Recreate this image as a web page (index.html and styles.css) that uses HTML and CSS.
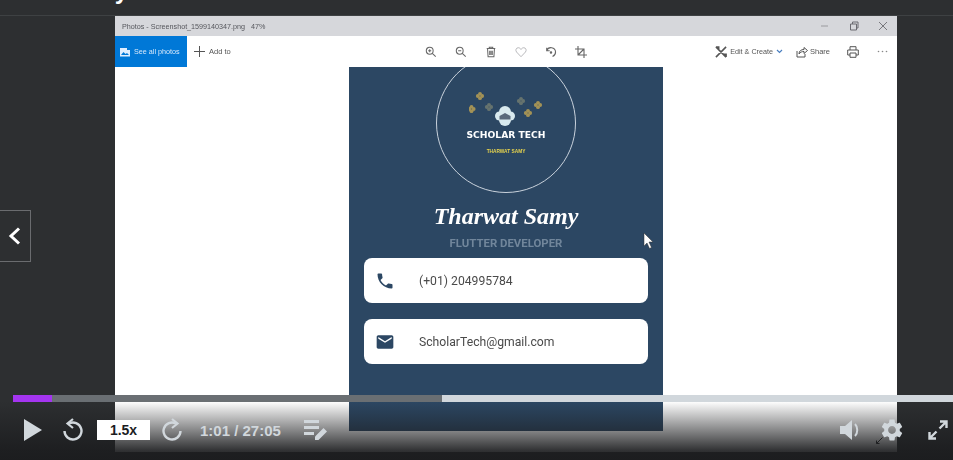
FILE: index.html
```html
<!DOCTYPE html>
<html lang="en">
<head>
    <meta charset="UTF-8">
    <meta name="viewport" content="width=device-width, initial-scale=1.0">
    <title>Course player</title>
    <link rel="stylesheet" href="styles.css">
</head>
<body>
    <div id="top-bar"><span class="course-title">Flutter Study</span></div>
    <div id="stage">
        <div id="video">
            <div class="title-bar">
                <span>Photos - Screenshot_1599140347.png &nbsp; 47%</span>
                <div class="window-buttons">
                    <svg width="12" height="12" viewBox="0 0 12 12"><path d="M2 6h7" stroke="#9a9a9e" fill="none"/></svg>
                    <svg width="12" height="12" viewBox="0 0 12 12"><path d="M2.500 4h6v6h-6zM4.500 4V2h5.500v6H8.500" stroke="#6a6a70" fill="none"/></svg>
                    <svg width="12" height="12" viewBox="0 0 12 12"><path d="M2 2l8 8M10 2l-8 8" stroke="#77777c" fill="none"/></svg>
                </div>
            </div>
            <div class="tool-bar">
                <div class="tools-left">
                    <div class="see-all">
                        <svg width="10" height="10" viewBox="0 0 10 10"><path d="M0 1h7v2h3v6.500H0z" fill="#dfeeff"/><path d="M1 8l2.500-3 2 2 1.500-1 2 2z" fill="#0078d7"/></svg>
                        <span>See all photos</span>
                    </div>
                    <div class="add-to">
                        <svg width="11" height="11" viewBox="0 0 11 11"><path d="M5.500 0v11M0 5.500h11" stroke="#555" fill="none"/></svg>
                        <span>Add to</span>
                    </div>
                </div>
                <div class="tools-center">
                    <svg width="12" height="12" viewBox="0 0 14 14" fill="none" stroke="#666" stroke-width="1.200"><circle cx="5.500" cy="5.500" r="4"/><path d="M8.500 8.500l4 4M3.700 5.500h3.600M5.500 3.700v3.600"/></svg>
                    <svg width="12" height="12" viewBox="0 0 14 14" fill="none" stroke="#666" stroke-width="1.200"><circle cx="5.500" cy="5.500" r="4"/><path d="M8.500 8.500l4 4M3.700 5.500h3.600"/></svg>
                    <svg width="12" height="12" viewBox="0 0 14 14" fill="none" stroke="#666" stroke-width="1.200"><path d="M2 3h10M5 3V1.500h4V3M3 3.500l.6 9h6.800l.6-9M5.500 5.500v5M7 5.500v5M8.500 5.500v5"/></svg>
                    <svg width="12" height="12" viewBox="0 0 14 14" fill="none" stroke="#b5b5b8" stroke-width="1.100"><path d="M7 12.500L1.800 7C.2 5 1.200 2 3.800 2 5.300 2 6.400 3 7 4 7.600 3 8.700 2 10.200 2c2.600 0 3.600 3 2 5z"/></svg>
                    <svg width="12" height="12" viewBox="0 0 14 14" fill="none" stroke="#666" stroke-width="1.300"><path d="M2 5.500A5.300 5.300 0 0 1 12.300 7c0 2.500-1.500 4.400-3.500 5.300M2 2v3.500h3.500"/><circle cx="7" cy="7.500" r=".8" fill="#666"/></svg>
                    <svg width="12" height="12" viewBox="0 0 14 14" fill="none" stroke="#666" stroke-width="1.300"><path d="M3.500 0v10.500H14M0 3.500h10.500V14M3.500 10.500l7-7"/></svg>
                </div>
                <div class="tools-right">
                    <div class="tool-text edit">
                        <svg width="12" height="12" viewBox="0 0 13 13" fill="none" stroke="#555" stroke-width="1.700"><path d="M1 1l11 11M12 1L1 12M1 1h3v3M9 9h3v3"/></svg>
                        <span>Edit &amp; Create</span>
                        <svg width="7" height="5" viewBox="0 0 7 5" fill="none" stroke="#4a7fc0" stroke-width="1.200"><path d="M1 1l2.500 2.500L6 1"/></svg>
                    </div>
                    <div class="tool-text share">
                        <svg width="12" height="12" viewBox="0 0 12 12" fill="none" stroke="#555"><path d="M1 5v6h8V8M3 8c0-3 2-4.500 5-4.500V1.500l3.500 3-3.500 3V5.500C6 5.500 4.500 6 3 8z"/></svg>
                        <span>Share</span>
                    </div>
                    <svg class="print" width="12" height="12" viewBox="0 0 12 12" fill="none" stroke="#555"><path d="M3 4V.7h6V4M3 9H.7V4h10.600v5H9M3 7h6v4.300H3z"/></svg>
                    <svg class="more" width="11" height="3" viewBox="0 0 11 3" fill="#888"><circle cx="1.500" cy="1.500" r=".8"/><circle cx="5.500" cy="1.500" r=".8"/><circle cx="9.500" cy="1.500" r=".8"/></svg>
                </div>
            </div>
            <div class="photo-area">
                <div class="phone-card">
                    <div class="logo-circle">
                        <svg class="logo-art" width="74" height="36" viewBox="0 0 74 36">
                            <defs>
                                <g id="rosette">
                                    <circle cx="0" cy="-2.200" r="1.900"/>
                                    <circle cx="0" cy="2.200" r="1.900"/>
                                    <circle cx="-2.200" cy="0" r="1.900"/>
                                    <circle cx="2.200" cy="0" r="1.900"/>
                                </g>
                            </defs>
                            <g fill="#a39256">
                                <use href="#rosette" x="11" y="5"/>
                                <use href="#rosette" x="2.500" y="18"/>
                                <use href="#rosette" x="69" y="14"/>
                                <use href="#rosette" x="59" y="22"/>
                            </g>
                            <g fill="#66736e">
                                <use href="#rosette" x="20" y="16"/>
                                <use href="#rosette" x="52" y="10"/>
                            </g>
                            <g fill="#d8e9ee">
                                <circle cx="36" cy="21" r="6"/>
                                <circle cx="30.500" cy="25" r="4.500"/>
                                <circle cx="41.500" cy="25" r="4.500"/>
                                <circle cx="36" cy="29" r="6"/>
                            </g>
                            <path d="M30.500 25l5.500-3 5.500 3v3.500h-11z" fill="#59687a"/>
                        </svg>
                        <div class="logo-name">SCHOLAR TECH</div>
                        <div class="logo-owner">THARWAT SAMY</div>
                    </div>
                    <div class="person-name">Tharwat Samy</div>
                    <div class="person-job">FLUTTER DEVELOPER</div>
                    <div class="contact-card">
                        <svg viewBox="0 0 24 24" fill="#2c4763"><path d="M6.620 10.790c1.440 2.830 3.760 5.140 6.590 6.590l2.200-2.200c.27-.27.67-.36 1.020-.24 1.120.37 2.330.57 3.570.57.550 0 1 .45 1 1V20c0 .55-.45 1-1 1-9.390 0-17-7.610-17-17 0-.55.45-1 1-1h3.500c.55 0 1 .45 1 1 0 1.250.2 2.450.57 3.570.11.350.03.740-.25 1.020l-2.200 2.200z"/></svg>
                        <span>(+01) 204995784</span>
                    </div>
                    <div class="contact-card">
                        <svg viewBox="0 0 24 24" fill="#2c4763"><path d="M20 4H4c-1.100 0-1.990.9-1.990 2L2 18c0 1.100.9 2 2 2h16c1.100 0 2-.9 2-2V6c0-1.100-.9-2-2-2zm0 4l-8 5-8-5V6l8 5 8-5v2z"/></svg>
                        <span>ScholarTech@gmail.com</span>
                    </div>
                </div>
            </div>
        </div>
        <svg class="mouse-cursor" width="11" height="16" viewBox="0 0 11 16"><path d="M1 0v13l3-3 2.500 5.500 2-1L6 9h4z" fill="#fff" stroke="#333" stroke-width=".5"/></svg>
        <svg class="resize-cursor" width="7" height="7" viewBox="0 0 7 7"><path d="M.5 6.500l6-6M.5 3.500v3h3" fill="none" stroke="#2b2b2b"/></svg>
        <button class="prev-button">
            <svg width="13" height="18" viewBox="0 0 13 18" fill="none" stroke="#fff" stroke-width="3"><path d="M11 1.500L3 9l8 7.500"/></svg>
        </button>
        <div class="player-controls">
            <div class="progress">
                <div class="progress-played"></div>
                <div class="progress-buffer"></div>
            </div>
            <div class="control-row">
                <svg class="play" width="18" height="22" viewBox="0 0 18 22" fill="#d1d7dc"><path d="M0 0l18 11L0 22z"/></svg>
                <svg class="rewind" width="20" height="24" viewBox="0 0 20 24" fill="none" stroke="#d1d7dc" stroke-width="2.400"><path d="M6 5.500a8.500 8.500 0 1 1-4.500 7.500"/><path d="M10 1L4.500 5.500 10 10" stroke-width="2.200"/></svg>
                <div class="speed">1.5x</div>
                <svg class="forward" width="20" height="24" viewBox="0 0 20 24" fill="none" stroke="#d1d7dc" stroke-width="2.400"><path d="M14 5.500a8.500 8.500 0 1 0 4.500 7.500"/><path d="M10 1l5.500 4.500L10 10" stroke-width="2.200"/></svg>
                <div class="time">1:01 / 27:05</div>
                <svg class="notes" width="24" height="22" viewBox="0 0 24 22" fill="#d1d7dc"><path d="M0 1h15v3H0zM0 7h15v3H0zM0 13h10v3H0z"/><path d="M11 21v-3.500L19.500 9l3.500 3.500L14.500 21z"/></svg>
                <div class="controls-right">
                    <svg width="21" height="20" viewBox="0 0 21 20" fill="#d1d7dc"><path d="M0 6h5l7-6v20l-7-6H0z"/><path d="M15 4c3 3 3 9 0 12" fill="none" stroke="#d1d7dc" stroke-width="2"/></svg>
                    <svg class="gear" width="26" height="26" viewBox="0 0 24 24" fill="#d1d7dc"><path d="M19.140 12.940c.04-.3.060-.61.060-.94 0-.32-.02-.64-.07-.94l2.030-1.580c.18-.14.230-.41.120-.61l-1.920-3.320c-.12-.22-.37-.29-.59-.22l-2.390.96c-.5-.38-1.030-.7-1.620-.94l-.36-2.540c-.04-.24-.24-.41-.48-.41h-3.840c-.24 0-.43.170-.47.410l-.36 2.540c-.59.240-1.130.570-1.620.94l-2.390-.96c-.22-.08-.47 0-.59.220L2.740 8.870c-.12.210-.08.470.12.610l2.030 1.580c-.05.300-.09.630-.09.940s.02.640.07.940l-2.030 1.580c-.18.140-.23.410-.12.610l1.920 3.320c.12.220.37.290.59.220l2.390-.96c.5.380 1.030.7 1.620.94l.36 2.540c.05.240.24.410.48.410h3.840c.24 0 .44-.17.47-.41l.36-2.540c.59-.24 1.130-.56 1.620-.94l2.390.96c.22.080.47 0 .59-.22l1.920-3.320c.12-.22.070-.47-.12-.61l-2.010-1.580zM12 15.600c-1.980 0-3.600-1.620-3.600-3.600s1.620-3.600 3.600-3.600 3.600 1.620 3.600 3.600-1.620 3.600-3.600 3.600z"/></svg>
                    <svg class="fullscreen" width="20" height="20" viewBox="0 0 20 20" fill="none" stroke="#d1d7dc" stroke-width="2.400"><path d="M12 1.500h6.500V8M18 2l-6.500 6.500M8 18.500H1.500V12M2 18l6.500-6.500"/></svg>
                </div>
            </div>
        </div>
    </div>
</body>
</html>
```

FILE: styles.css
```css
html, body {
    height: 100%;
}
body {
    margin: 0;
    background-color: #2d2f31;
    font-family: 'Liberation Sans', Arial, sans-serif;
    overflow: hidden;
}
#top-bar {
    height: 15px;
    border-bottom: 1px solid #3e4143;
    overflow: hidden;
}
.course-title {
    display: block;
    margin-top: -25px;
    margin-left: -20px;
    color: white;
    font-size: 24px;
    font-weight: bold;
    line-height: 32px;
}
#stage {
    position: relative;
    height: 444px;
}
#video {
    width: 782px;
    height: 436px;
    margin-left: 115px;
    background-color: white;
    display: flex;
    flex-direction: column;
    filter: blur(0.45px); /* source is a soft video frame */
}
.title-bar {
    height: 20px;
    flex: none;
    display: flex;
    align-items: center;
    justify-content: space-between;
    padding: 0 8px 0 7px;
    background-color: #d6d7db;
    color: #55565c;
    font-size: 7.2px;
}
.window-buttons {
    display: flex;
    gap: 17px;
}
.tool-bar {
    height: 31px;
    flex: none;
    display: grid;
    grid-template-columns: 1fr auto 1fr;
    align-items: center;
    color: #555;
    font-size: 7.5px;
}
.tools-left {
    display: flex;
    align-items: center;
    height: 100%;
}
.see-all {
    width: 72px;
    height: 100%;
    box-sizing: border-box;
    padding-left: 5px;
    display: flex;
    align-items: center;
    gap: 4px;
    background-color: #0078d7;
    color: #d7e9fb;
    font-size: 7.2px;
}
.add-to {
    display: flex;
    align-items: center;
    gap: 4px;
    margin-left: 7px;
}
.tools-center {
    display: flex;
    gap: 18px;
}
.tools-right {
    display: flex;
    align-items: center;
    justify-content: flex-end;
    padding-right: 9px;
}
.tool-text {
    display: flex;
    align-items: center;
    gap: 2px;
}
.edit {
    gap: 3px;
    font-size: 7.2px;
}
.share {
    margin-left: 13px;
}
.print {
    margin-left: 17px;
}
.more {
    margin-left: 18px;
}
.photo-area {
    flex: 1;
    display: flex;
    justify-content: center;
    min-height: 0;
}
.phone-card {
    width: 314px;
    height: 364px;
    background-color: #2c4763;
    overflow: hidden;
    display: flex;
    flex-direction: column;
    align-items: center;
}
.logo-circle {
    width: 140px;
    height: 140px;
    flex: none;
    box-sizing: border-box;
    margin-top: -14px;
    padding-top: 37px;
    border: 1px solid #c9d2dc;
    border-radius: 50%;
    display: flex;
    flex-direction: column;
    align-items: center;
}
.logo-art {
    flex: none;
}
.logo-name {
    margin-top: 1px;
    color: white;
    font-family: 'DejaVu Sans', sans-serif;
    font-size: 9.2px;
    font-weight: bold;
    line-height: 14px;
}
.logo-owner {
    margin-top: 7px;
    color: #e8d44d;
    font-size: 4.800px;
    font-weight: bold;
    line-height: 6px;
}
.person-name {
    margin-top: 4px;
    color: white;
    font-family: 'Liberation Serif', serif;
    font-size: 24px;
    font-style: italic;
    font-weight: bold;
    line-height: 39px;
    white-space: nowrap;
}
.person-job {
    color: #71869b;
    font-family: Roboto, sans-serif;
    font-size: 11.400px;
    font-weight: bold;
    line-height: 14px;
}
.contact-card {
    width: 284px;
    height: 45px;
    flex: none;
    box-sizing: border-box;
    margin-top: 16px;
    padding-left: 11px;
    background-color: white;
    border-radius: 8px;
    display: flex;
    align-items: center;
    gap: 24px;
    color: #4a4a4a;
    font-family: Roboto, sans-serif;
    font-size: 12.200px;
}
.person-job + .contact-card {
    margin-top: 8px;
}
.contact-card svg {
    width: 20px;
    height: 20px;
}
.mouse-cursor {
    position: absolute;
    top: 217px;
    left: 643px;
}
.resize-cursor {
    position: absolute;
    top: 421px;
    left: 876px;
}
.prev-button {
    position: absolute;
    top: 194px;
    left: 0;
    width: 31px;
    height: 52px;
    padding: 0 2px 0 0;
    background-color: #2d2f31;
    border: 1px solid #6a6c6f;
    border-left: none;
    display: flex;
    align-items: center;
    justify-content: center;
}
.player-controls {
    position: absolute;
    left: 0;
    right: 0;
    bottom: 0;
    height: 65px;
    background: linear-gradient(to bottom, rgba(28,29,31,0) 10%, rgba(28,29,31,0.9) 85%, #1c1d1f 100%);
}
.progress {
    height: 7px;
    margin-left: 13px;
    background-color: #d1d7dc;
    display: flex;
}
.progress-played {
    width: 39px;
    background-color: #a435f0;
}
.progress-buffer {
    width: 390px;
    background-color: #6a6f73;
}
.control-row {
    height: 44px;
    margin-top: 6px;
    padding: 0 5px 0 24px;
    display: flex;
    align-items: center;
}
.rewind {
    margin-left: 21px;
}
.speed {
    width: 53px;
    height: 20px;
    margin-left: 14px;
    background-color: white;
    color: #1c1d1f;
    font-size: 14px;
    font-weight: bold;
    line-height: 20px;
    text-align: center;
}
.forward {
    margin-left: 12px;
}
.time {
    margin-left: 18px;
    color: #d1d7dc;
    font-size: 15px;
    font-weight: bold;
    white-space: nowrap;
}
.notes {
    margin-left: 23px;
}
.controls-right {
    margin-left: auto;
    display: flex;
    align-items: center;
}
.gear {
    margin-left: 18px;
}
.fullscreen {
    margin-left: 23px;
}
```
